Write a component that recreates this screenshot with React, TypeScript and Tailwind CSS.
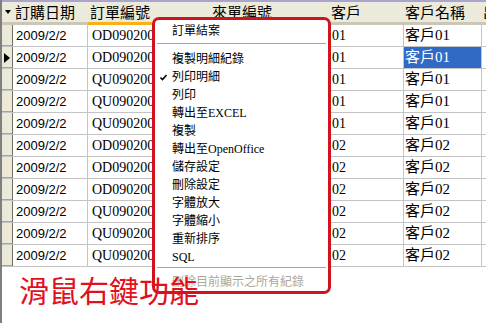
import React from "react";

const rows = [
  { code: "OD", c: "01" },
  { code: "OD", c: "01" },
  { code: "QU", c: "01" },
  { code: "QU", c: "01" },
  { code: "QU", c: "01" },
  { code: "OD", c: "02" },
  { code: "OD", c: "02" },
  { code: "OD", c: "02" },
  { code: "QU", c: "02" },
  { code: "QU", c: "02" },
  { code: "QU", c: "02" },
];

const menuItems1 = [
  "複製明細紀錄",
  "列印明細",
  "列印",
  "轉出至EXCEL",
  "複製",
  "轉出至OpenOffice",
  "儲存設定",
  "刪除設定",
  "字體放大",
  "字體縮小",
  "重新排序",
  "SQL",
];

const cjk = { fontFamily: '"Noto Sans CJK TC", "Noto Sans", sans-serif' };
const serifCjk = { fontFamily: '"Liberation Serif", "Noto Sans CJK TC", serif' };
const sans = { fontFamily: '"Liberation Sans", Arial, sans-serif' };

export default function App() {
  return (
    <div className="relative w-[486px] h-[323px] bg-white overflow-hidden border-l-2 border-[#7f7f7f]">
      {/* header */}
      <div className="flex h-[25px] border-t-2 border-[#a9a5cf] bg-[#ebeadb] text-[15px] text-black" style={cjk}>
        <div className="w-[11px] shrink-0 flex items-center justify-center border-b-[3px] border-[#cbc7b8]">
          <svg width="6" height="4" viewBox="0 0 6 4"><path d="M0 0 L6 0 L3 4 Z" fill="#000" /></svg>
        </div>
        <div className="w-[75px] shrink-0 pl-[2px] leading-[20px] border-b-[3px] border-[#cbc7b8] whitespace-nowrap overflow-hidden">訂購日期</div>
        <div className="w-[121px] shrink-0 pl-[2px] leading-[20px] border-b-[3px] border-[#f9b119] whitespace-nowrap overflow-hidden">訂單編號</div>
        <div className="w-[121px] shrink-0 pl-[3px] leading-[20px] border-b-[3px] border-[#cbc7b8] whitespace-nowrap overflow-hidden">來單編號</div>
        <div className="w-[74px] shrink-0 pl-[1px] leading-[20px] border-b-[3px] border-[#cbc7b8] whitespace-nowrap overflow-hidden">客戶</div>
        <div className="w-[78px] shrink-0 pl-[1px] leading-[20px] border-b-[3px] border-[#cbc7b8] whitespace-nowrap overflow-hidden">客戶名稱</div>
        <div className="w-[100px] shrink-0 pl-[1px] leading-[20px] border-b-[3px] border-[#cbc7b8] whitespace-nowrap overflow-hidden">出貨日期</div>
      </div>

      {/* rows */}
      {rows.map((r, i) => (
        <div key={i} className="flex h-[22px] border-b border-[#c4c4c4]">
          <div className="w-[11px] shrink-0 bg-[#ece9d8] border-r border-[#716f64] shadow-[inset_0_-1px_0_#a7a592] flex items-center justify-center">
            {i === 1 && (
              <svg width="6" height="10" viewBox="0 0 6 10"><path d="M0 0 L6 5 L0 10 Z" fill="#000" /></svg>
            )}
          </div>
          <div className="w-[75px] shrink-0 pl-[3px] border-r border-[#c4c4c4] text-[13px] leading-[21px] whitespace-nowrap overflow-hidden" style={sans}>
            2009/2/2
          </div>
          <div className="w-[121px] shrink-0 pl-[4px] border-r border-[#c4c4c4] text-[14px] leading-[21px] whitespace-nowrap overflow-hidden" style={serifCjk}>
            {r.code}0902000{i + 1}
          </div>
          <div className="w-[121px] shrink-0 pl-[2px] border-r border-[#c4c4c4] text-[14px] leading-[21px] whitespace-nowrap overflow-hidden" style={serifCjk}>
            &nbsp;
          </div>
          <div className="w-[74px] shrink-0 pl-[2px] border-r border-[#c4c4c4] text-[14px] leading-[21px] whitespace-nowrap overflow-hidden" style={serifCjk}>
            {r.c}
          </div>
          <div
            className={
              "w-[78px] shrink-0 pl-[1px] border-r border-[#c4c4c4] text-[15px] leading-[21px] whitespace-nowrap overflow-hidden " +
              (i === 1 ? "bg-[#316ac5] text-white" : "text-black")
            }
            style={serifCjk}
          >
            客戶{r.c}
          </div>
          <div className="w-[100px] shrink-0" />
        </div>
      ))}

      {/* context menu */}
      <div className="absolute left-[150px] top-[17px] w-[179px] h-[277px] border-[3px] border-[#d0141e] rounded-[7px] bg-white pt-[2px] text-[12px] text-black" style={serifCjk}>
        <div className="h-[18px] leading-[18px] pl-[17px]">訂單結案</div>
        <div className="mt-[3px] mb-[6px] mx-[2px] h-px bg-[#aca899]" />
        {menuItems1.map((t) => (
          <div key={t} className="relative h-[18px] leading-[18px] pl-[17px] whitespace-nowrap">
            {t === "列印明細" && (
              <svg className="absolute left-[5px] top-[6px]" width="7" height="7" viewBox="0 0 7 7">
                <path d="M0.5 3.5 L2.5 5.5 L6.5 1" stroke="#000" strokeWidth="1.6" fill="none" />
              </svg>
            )}
            {t}
          </div>
        ))}
        <div className="mt-[1px] mb-[5px] mx-[2px] h-px bg-[#aca899]" />
        <div className="h-[18px] leading-[18px] pl-[17px] text-[#aca899] whitespace-nowrap">刪除目前顯示之所有紀錄</div>
      </div>

      {/* annotation */}
      <div className="absolute left-[17px] top-[274px] text-[30px] leading-[30px] text-[#e3101c] whitespace-nowrap" style={cjk}>
        滑鼠右鍵功能
      </div>
    </div>
  );
}
